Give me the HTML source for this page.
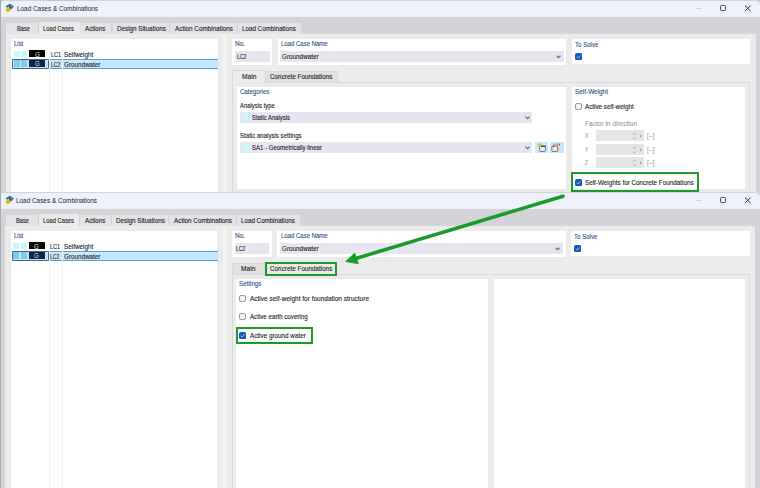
<!DOCTYPE html>
<html><head><meta charset="utf-8">
<style>
html,body{margin:0;padding:0;}
body{width:760px;height:488px;overflow:hidden;position:relative;background:#c8c9ce;font-family:"Liberation Sans",sans-serif;}
.a{position:absolute;}
.t{position:absolute;font-size:7px;line-height:8px;white-space:nowrap;color:#1e1e1e;transform-origin:0 0;}
.lb{color:#344f85;}
</style></head><body>
<div class="a" style="left:0px;top:0px;width:1.00px;height:488.00px;background:#a8aab2;"></div>
<div class="a" style="left:1px;top:0px;width:759.00px;height:600.00px;background:#d3d3d8;border-top-right-radius:5px;border-top-left-radius:3px;"></div>
<div class="a" style="left:1px;top:0px;width:759.00px;height:17.00px;background:#eef1f9;border-top:1px solid #d2d4da;box-sizing:border-box;border-top-right-radius:5px;border-top-left-radius:3px;"></div>
<svg class="a" style="left:0;top:0px" width="20" height="16" viewBox="0 0 20 16"><path d="M5.6 6.6 L9.8 3.8 L13.8 6.4 L11.2 9.4 L8 8.6 Z" fill="#2d5799"/><path d="M9.8 3.8 L13.8 6.4 L11.2 9.4 L10.4 6 Z" fill="#4879bb"/><path d="M9.2 6 C7.5 6.8 5.8 8.3 5.8 10 C5.8 11.3 6.9 12 8.1 12 C9.6 12 10.6 11.1 10.6 9.8 C10.6 8.7 9.9 8.1 9 8 C9.1 7.3 9.3 6.6 9.2 6 Z" fill="#eec21a"/><ellipse cx="8.2" cy="9.8" rx="0.75" ry="0.85" fill="#8c8a78"/></svg>
<div id="t0" class="t " style="left:16.74px;top:4.90px;transform:scaleX(0.9131);-webkit-text-stroke:0.04px currentColor;color:#2a2a2a">Load Cases &amp; Combinations</div>
<div class="a" style="left:696px;top:8px;width:6.00px;height:0.70px;background:#d4d6dc;"></div>
<div class="a" style="left:720px;top:5.3px;width:6.00px;height:5.70px;border:1px solid #484848;border-radius:1.5px;box-sizing:border-box;"></div>
<svg class="a" style="left:744px;top:5px" width="8" height="7" viewBox="0 0 8 7"><path d="M0.9 0.6 L6.6 6.1 M6.6 0.6 L0.9 6.1" stroke="#2a2a2a" stroke-width="0.95"/></svg>
<div class="a" style="left:5.5px;top:33.5px;width:750.10px;height:566.50px;background:#ebebeb;"></div>
<div class="a" style="left:6px;top:23px;width:32.00px;height:10.50px;background:#e3e3e6;"></div>
<div id="t1" class="t " style="left:16.60px;top:24.80px;transform:scaleX(0.8174);-webkit-text-stroke:0.12px currentColor;">Base</div>
<div class="a" style="left:39px;top:22px;width:40.70px;height:11.60px;background:#ebebeb;"></div>
<div id="t2" class="t " style="left:43.40px;top:24.80px;transform:scaleX(0.8282);-webkit-text-stroke:0.12px currentColor;">Load Cases</div>
<div class="a" style="left:80px;top:23px;width:31.00px;height:10.50px;background:#e3e3e6;"></div>
<div id="t3" class="t " style="left:85.00px;top:24.80px;transform:scaleX(0.8848);-webkit-text-stroke:0.12px currentColor;">Actions</div>
<div class="a" style="left:112.5px;top:23px;width:56.40px;height:10.50px;background:#e3e3e6;"></div>
<div id="t4" class="t " style="left:116.76px;top:24.80px;transform:scaleX(0.8957);-webkit-text-stroke:0.12px currentColor;">Design Situations</div>
<div class="a" style="left:169.5px;top:23px;width:67.00px;height:10.50px;background:#e3e3e6;"></div>
<div id="t5" class="t " style="left:174.52px;top:24.80px;transform:scaleX(0.9039);-webkit-text-stroke:0.12px currentColor;">Action Combinations</div>
<div class="a" style="left:237.9px;top:23px;width:63.10px;height:10.50px;background:#e3e3e6;"></div>
<div id="t6" class="t " style="left:241.76px;top:24.80px;transform:scaleX(0.8919);-webkit-text-stroke:0.12px currentColor;">Load Combinations</div>
<div class="a" style="left:11.3px;top:39px;width:206.70px;height:561.00px;background:#fff;"></div>
<div id="t7" class="t lb" style="left:14.02px;top:40.00px;transform:scaleX(0.8492);-webkit-text-stroke:0.12px currentColor;">List</div>
<div class="a" style="left:49px;top:50px;width:1.00px;height:550.00px;background:#efefef;"></div>
<div class="a" style="left:62px;top:50px;width:1.00px;height:550.00px;background:#efefef;"></div>
<div class="a" style="left:13.5px;top:50.5px;width:6.00px;height:6.50px;background:#c4fbff;"></div>
<div class="a" style="left:21px;top:50.5px;width:6.00px;height:6.50px;background:#c4fbff;"></div>
<div class="a" style="left:29px;top:50.2px;width:16.00px;height:6.80px;background:#050505;"></div>
<div id="t8" class="t " style="left:34.70px;top:50.84px;font-size:6.6px;line-height:7.54px;transform:scaleX(0.9333);color:#e0e0e0">G</div>
<div id="t9" class="t " style="left:50.52px;top:50.80px;transform:scaleX(0.7919);-webkit-text-stroke:0.12px currentColor;">LC1</div>
<div id="t10" class="t " style="left:64.00px;top:50.80px;transform:scaleX(0.9047);-webkit-text-stroke:0.12px currentColor;">Selfweight</div>
<div class="a" style="left:12px;top:59px;width:206.00px;height:10.00px;background:#cbe6fb;border-top:1px solid #56a0e0;border-bottom:1px solid #56a0e0;box-sizing:border-box;"></div>
<div class="a" style="left:49px;top:59px;width:1.00px;height:10.00px;background:#e2f0fc;"></div>
<div class="a" style="left:62px;top:59px;width:1.00px;height:10.00px;background:#e2f0fc;"></div>
<div class="a" style="left:12px;top:59px;width:37.00px;height:10.00px;border:1px solid #3d6590;border-radius:1.5px;box-sizing:border-box;"></div>
<div class="a" style="left:13.5px;top:60.2px;width:6.00px;height:6.60px;background:#7dcbea;"></div>
<div class="a" style="left:21px;top:60.2px;width:6.00px;height:6.60px;background:#7dcbea;"></div>
<div class="a" style="left:29px;top:60.2px;width:16.00px;height:6.40px;background:#0c2744;"></div>
<div id="t11" class="t " style="left:34.70px;top:60.44px;font-size:6.6px;line-height:7.54px;transform:scaleX(0.9333);color:#d0dce8">G</div>
<div id="t12" class="t " style="left:50.80px;top:60.50px;transform:scaleX(0.7337);-webkit-text-stroke:0.12px currentColor;">LC2</div>
<div id="t13" class="t " style="left:64.00px;top:60.50px;transform:scaleX(0.8995);-webkit-text-stroke:0.12px currentColor;">Groundwater</div>
<div class="a" style="left:223px;top:34px;width:4.20px;height:566.00px;background:#f2f2f3;"></div>
<div class="a" style="left:232.2px;top:39px;width:39.90px;height:25.50px;background:#fff;"></div>
<div id="t14" class="t lb" style="left:235.00px;top:40.20px;transform:scaleX(0.9355);-webkit-text-stroke:0.12px currentColor;">No.</div>
<div class="a" style="left:235px;top:50.9px;width:34.50px;height:10.80px;background:#e6e6f0;"></div>
<div id="t15" class="t " style="left:236.74px;top:53.00px;transform:scaleX(0.7171);-webkit-text-stroke:0.12px currentColor;">LC2</div>
<div class="a" style="left:277.9px;top:39px;width:288.40px;height:25.50px;background:#fff;"></div>
<div id="t16" class="t lb" style="left:281.00px;top:40.20px;transform:scaleX(0.8564);-webkit-text-stroke:0.12px currentColor;">Load Case Name</div>
<div class="a" style="left:280.3px;top:50.9px;width:283.50px;height:10.80px;background:#e6e6f0;"></div>
<div id="t17" class="t " style="left:282.26px;top:53.00px;transform:scaleX(0.9053);-webkit-text-stroke:0.12px currentColor;">Groundwater</div>
<svg class="a" style="left:555.6px;top:55.2px" width="6" height="4" viewBox="0 0 6 4"><path d="M0.6 0.7 L2.6 2.6 L4.6 0.7" stroke="#707070" stroke-width="1.2" fill="none"/></svg>
<div class="a" style="left:571.8px;top:39px;width:178.30px;height:25.40px;background:#fff;"></div>
<div id="t18" class="t lb" style="left:574.98px;top:40.50px;transform:scaleX(0.8712);-webkit-text-stroke:0.12px currentColor;">To Solve</div>
<svg class="a" style="left:574.5px;top:52.9px" width="7.2" height="7.2" viewBox="0 0 7 7"><rect x="0" y="0" width="7" height="7" rx="1.8" fill="#1858b9"/><path d="M1.8 3.6 L3 4.8 L5.3 2.4" stroke="#fff" stroke-width="0.6" fill="none"/></svg>
<div class="a" style="left:232px;top:81.5px;width:518.00px;height:518.50px;background:#ebebeb;border:1px solid #d9d9de;box-sizing:border-box;"></div>
<div class="a" style="left:232px;top:70.3px;width:34.40px;height:12.70px;background:#ebebeb;border:1px solid #d9d9de;border-bottom:none;box-sizing:border-box;"></div>
<div class="a" style="left:266.4px;top:71.4px;width:71.40px;height:10.60px;background:#e1e1e4;border:1px solid #d9d9de;border-left:none;border-bottom:none;box-sizing:border-box;"></div>
<div id="t19" class="t " style="left:241.74px;top:73.00px;transform:scaleX(0.9500);-webkit-text-stroke:0.12px currentColor;">Main</div>
<div id="t20" class="t " style="left:270.00px;top:73.00px;transform:scaleX(0.9076);-webkit-text-stroke:0.12px currentColor;">Concrete Foundations</div>
<div class="a" style="left:237.3px;top:86.5px;width:329.20px;height:102.50px;background:#fff;"></div>
<div id="t21" class="t lb" style="left:240.00px;top:87.50px;transform:scaleX(0.8653);-webkit-text-stroke:0.12px currentColor;">Categories</div>
<div id="t22" class="t " style="left:240.00px;top:101.80px;transform:scaleX(0.8465);-webkit-text-stroke:0.12px currentColor;">Analysis type</div>
<div class="a" style="left:239.6px;top:111.8px;width:292.40px;height:11.20px;background:#e6e6f0;"></div>
<div class="a" style="left:242.5px;top:114px;width:6.10px;height:6.40px;background:#c4fbff;"></div>
<div id="t23" class="t " style="left:251.50px;top:113.70px;transform:scaleX(0.8415);-webkit-text-stroke:0.12px currentColor;">Static Analysis</div>
<svg class="a" style="left:524.9px;top:115.6px" width="6" height="4" viewBox="0 0 6 4"><path d="M0.6 0.7 L2.6 2.6 L4.6 0.7" stroke="#707070" stroke-width="1.2" fill="none"/></svg>
<div id="t24" class="t " style="left:240.00px;top:132.40px;transform:scaleX(0.8694);-webkit-text-stroke:0.12px currentColor;">Static analysis settings</div>
<div class="a" style="left:239.6px;top:142px;width:292.40px;height:11.10px;background:#e6e6f0;"></div>
<div class="a" style="left:242.5px;top:144.5px;width:6.10px;height:6.30px;background:#c4fbff;"></div>
<div id="t25" class="t " style="left:251.50px;top:143.80px;transform:scaleX(0.8598);-webkit-text-stroke:0.12px currentColor;">SA1 - Geometrically linear</div>
<svg class="a" style="left:524.9px;top:145.8px" width="6" height="4" viewBox="0 0 6 4"><path d="M0.6 0.7 L2.6 2.6 L4.6 0.7" stroke="#707070" stroke-width="1.2" fill="none"/></svg>
<div class="a" style="left:535px;top:142.2px;width:13.30px;height:10.80px;background:#cde5f8;"></div>
<div class="a" style="left:550.3px;top:142.2px;width:13.50px;height:10.80px;background:#cde5f8;"></div>
<svg class="a" style="left:535px;top:142.2px" width="14" height="11" viewBox="0 0 14 11"><rect x="4.7" y="4.1" width="5.7" height="5.4" rx="0.8" fill="#eeeeee" stroke="#5a5a5a" stroke-width="0.8"/><rect x="5.8" y="3.7" width="4.8" height="1.2" fill="#1f2f8a"/><path d="M4.5 1 L5 2.6 L6.5 2.3 L5.5 3.4 L6.5 4.6 L5 4.3 L4.5 5.8 L4 4.3 L2.5 4.6 L3.5 3.4 L2.5 2.3 L4 2.6 Z" fill="#e8e800" stroke="#9a9a40" stroke-width="0.3"/></svg>
<svg class="a" style="left:550.3px;top:142.2px" width="14" height="11" viewBox="0 0 14 11"><rect x="1.9" y="4.1" width="5.8" height="5.4" rx="0.8" fill="#eeeeee" stroke="#5a5a5a" stroke-width="0.8"/><path d="M1.8 4.6 Q3 1.6 6.5 1.4 Q8.6 1.6 8.8 3 L7.2 4.8 L2.2 4.8 Z" fill="#d4a478"/><circle cx="3.6" cy="4.3" r="0.7" fill="#1f2f8a"/><path d="M8.9 1 L10.3 2.2 L9.6 4 L8.8 2.6 Z" fill="#3a70d0"/></svg>
<div class="a" style="left:571.8px;top:86.6px;width:173.70px;height:102.40px;background:#fff;"></div>
<div id="t26" class="t lb" style="left:574.98px;top:88.20px;transform:scaleX(0.9139);-webkit-text-stroke:0.12px currentColor;">Self-Weight</div>
<div class="a" style="left:574.5px;top:103.4px;width:7px;height:7px;border:1px solid #9a9a9a;border-radius:2px;box-sizing:border-box;background:#f4f4f4"></div>
<div id="t27" class="t " style="left:584.98px;top:103.30px;transform:scaleX(0.8943);-webkit-text-stroke:0.12px currentColor;">Active self-weight</div>
<div id="t28" class="t " style="left:584.54px;top:120.30px;transform:scaleX(0.9363);-webkit-text-stroke:0.12px currentColor;color:#a0a0a0">Factor in direction</div>
<div id="t29" class="t " style="left:584.70px;top:131.70px;transform:scaleX(0.7000);-webkit-text-stroke:0.12px currentColor;color:#a0a0a0">X</div>
<div class="a" style="left:595.8px;top:130px;width:48.20px;height:10.80px;background:#e5e5e5;"></div>
<svg class="a" style="left:632px;top:131.5px" width="12" height="8" viewBox="0 0 12 8"><path d="M1.3 2.4 L2.5 1.1 L3.7 2.4 M1.3 5.7 L2.5 7 L3.7 5.7" stroke="#9a9a9a" stroke-width="0.75" fill="none"/><path d="M8 2.6 L10.1 4 L8 5.4 Z" fill="#a0a0a0"/></svg>
<div id="t30" class="t " style="left:647.20px;top:132.00px;transform:scaleX(0.8714);-webkit-text-stroke:0.12px currentColor;color:#a0a0a0">[--]</div>
<div id="t31" class="t " style="left:584.70px;top:145.70px;transform:scaleX(0.7000);-webkit-text-stroke:0.12px currentColor;color:#a0a0a0">Y</div>
<div class="a" style="left:595.8px;top:144px;width:48.20px;height:10.80px;background:#e5e5e5;"></div>
<svg class="a" style="left:632px;top:145.5px" width="12" height="8" viewBox="0 0 12 8"><path d="M1.3 2.4 L2.5 1.1 L3.7 2.4 M1.3 5.7 L2.5 7 L3.7 5.7" stroke="#9a9a9a" stroke-width="0.75" fill="none"/><path d="M8 2.6 L10.1 4 L8 5.4 Z" fill="#a0a0a0"/></svg>
<div id="t32" class="t " style="left:647.20px;top:146.00px;transform:scaleX(0.8714);-webkit-text-stroke:0.12px currentColor;color:#a0a0a0">[--]</div>
<div id="t33" class="t " style="left:584.70px;top:158.90px;transform:scaleX(0.7000);-webkit-text-stroke:0.12px currentColor;color:#a0a0a0">Z</div>
<div class="a" style="left:595.8px;top:157.2px;width:48.20px;height:10.80px;background:#e5e5e5;"></div>
<svg class="a" style="left:632px;top:158.7px" width="12" height="8" viewBox="0 0 12 8"><path d="M1.3 2.4 L2.5 1.1 L3.7 2.4 M1.3 5.7 L2.5 7 L3.7 5.7" stroke="#9a9a9a" stroke-width="0.75" fill="none"/><path d="M8 2.6 L10.1 4 L8 5.4 Z" fill="#a0a0a0"/></svg>
<div id="t34" class="t " style="left:647.20px;top:159.20px;transform:scaleX(0.8714);-webkit-text-stroke:0.12px currentColor;color:#a0a0a0">[--]</div>
<div class="a" style="left:570.7px;top:171.9px;width:128.10px;height:19.80px;border:2px solid #1e9a2b;box-sizing:border-box;"></div>
<svg class="a" style="left:574.5px;top:178.7px" width="7.2" height="7.2" viewBox="0 0 7 7"><rect x="0" y="0" width="7" height="7" rx="1.8" fill="#1858b9"/><path d="M1.8 3.6 L3 4.8 L5.3 2.4" stroke="#fff" stroke-width="0.6" fill="none"/></svg>
<div id="t35" class="t " style="left:585.00px;top:178.70px;transform:scaleX(0.9009);-webkit-text-stroke:0.12px currentColor;">Self-Weights for Concrete Foundations</div>
<div class="a" style="left:48px;top:0px;width:28.00px;height:1.00px;background:#bcc6da;"></div>
<div class="a" style="left:-0.5px;top:0;width:761px;height:488px"><div class="a" style="left:1px;top:192px;width:759.00px;height:600.00px;background:#d3d3d8;border-top-right-radius:5px;border-top-left-radius:3px;"></div>
<div class="a" style="left:1px;top:192px;width:759.00px;height:17.00px;background:#eef1f9;border-top:1px solid #d2d4da;box-sizing:border-box;border-top-right-radius:5px;border-top-left-radius:3px;"></div>
<svg class="a" style="left:0;top:192px" width="20" height="16" viewBox="0 0 20 16"><path d="M5.6 6.6 L9.8 3.8 L13.8 6.4 L11.2 9.4 L8 8.6 Z" fill="#2d5799"/><path d="M9.8 3.8 L13.8 6.4 L11.2 9.4 L10.4 6 Z" fill="#4879bb"/><path d="M9.2 6 C7.5 6.8 5.8 8.3 5.8 10 C5.8 11.3 6.9 12 8.1 12 C9.6 12 10.6 11.1 10.6 9.8 C10.6 8.7 9.9 8.1 9 8 C9.1 7.3 9.3 6.6 9.2 6 Z" fill="#eec21a"/><ellipse cx="8.2" cy="9.8" rx="0.75" ry="0.85" fill="#8c8a78"/></svg>
<div id="t36" class="t " style="left:16.74px;top:196.90px;transform:scaleX(0.9131);-webkit-text-stroke:0.04px currentColor;color:#2a2a2a">Load Cases &amp; Combinations</div>
<div class="a" style="left:696px;top:200px;width:6.00px;height:0.70px;background:#d4d6dc;"></div>
<div class="a" style="left:720px;top:197.3px;width:6.00px;height:5.70px;border:1px solid #484848;border-radius:1.5px;box-sizing:border-box;"></div>
<svg class="a" style="left:744px;top:197px" width="8" height="7" viewBox="0 0 8 7"><path d="M0.9 0.6 L6.6 6.1 M6.6 0.6 L0.9 6.1" stroke="#2a2a2a" stroke-width="0.95"/></svg>
<div class="a" style="left:5.5px;top:225.5px;width:750.10px;height:566.50px;background:#ebebeb;"></div>
<div class="a" style="left:6px;top:215px;width:32.00px;height:10.50px;background:#e3e3e6;"></div>
<div id="t37" class="t " style="left:16.60px;top:216.80px;transform:scaleX(0.8174);-webkit-text-stroke:0.12px currentColor;">Base</div>
<div class="a" style="left:39px;top:214px;width:40.70px;height:11.60px;background:#ebebeb;"></div>
<div id="t38" class="t " style="left:43.40px;top:216.80px;transform:scaleX(0.8282);-webkit-text-stroke:0.12px currentColor;">Load Cases</div>
<div class="a" style="left:80px;top:215px;width:31.00px;height:10.50px;background:#e3e3e6;"></div>
<div id="t39" class="t " style="left:85.00px;top:216.80px;transform:scaleX(0.8848);-webkit-text-stroke:0.12px currentColor;">Actions</div>
<div class="a" style="left:112.5px;top:215px;width:56.40px;height:10.50px;background:#e3e3e6;"></div>
<div id="t40" class="t " style="left:116.76px;top:216.80px;transform:scaleX(0.8957);-webkit-text-stroke:0.12px currentColor;">Design Situations</div>
<div class="a" style="left:169.5px;top:215px;width:67.00px;height:10.50px;background:#e3e3e6;"></div>
<div id="t41" class="t " style="left:174.52px;top:216.80px;transform:scaleX(0.9039);-webkit-text-stroke:0.12px currentColor;">Action Combinations</div>
<div class="a" style="left:237.9px;top:215px;width:63.10px;height:10.50px;background:#e3e3e6;"></div>
<div id="t42" class="t " style="left:241.76px;top:216.80px;transform:scaleX(0.8919);-webkit-text-stroke:0.12px currentColor;">Load Combinations</div>
<div class="a" style="left:11.3px;top:231px;width:206.70px;height:561.00px;background:#fff;"></div>
<div id="t43" class="t lb" style="left:14.02px;top:232.00px;transform:scaleX(0.8492);-webkit-text-stroke:0.12px currentColor;">List</div>
<div class="a" style="left:49px;top:242px;width:1.00px;height:550.00px;background:#efefef;"></div>
<div class="a" style="left:62px;top:242px;width:1.00px;height:550.00px;background:#efefef;"></div>
<div class="a" style="left:13.5px;top:242.5px;width:6.00px;height:6.50px;background:#c4fbff;"></div>
<div class="a" style="left:21px;top:242.5px;width:6.00px;height:6.50px;background:#c4fbff;"></div>
<div class="a" style="left:29px;top:242.2px;width:16.00px;height:6.80px;background:#050505;"></div>
<div id="t44" class="t " style="left:34.70px;top:242.84px;font-size:6.6px;line-height:7.54px;transform:scaleX(0.9333);color:#e0e0e0">G</div>
<div id="t45" class="t " style="left:50.52px;top:242.80px;transform:scaleX(0.7919);-webkit-text-stroke:0.12px currentColor;">LC1</div>
<div id="t46" class="t " style="left:64.00px;top:242.80px;transform:scaleX(0.9047);-webkit-text-stroke:0.12px currentColor;">Selfweight</div>
<div class="a" style="left:12px;top:251px;width:206.00px;height:10.00px;background:#cbe6fb;border-top:1px solid #56a0e0;border-bottom:1px solid #56a0e0;box-sizing:border-box;"></div>
<div class="a" style="left:49px;top:251px;width:1.00px;height:10.00px;background:#e2f0fc;"></div>
<div class="a" style="left:62px;top:251px;width:1.00px;height:10.00px;background:#e2f0fc;"></div>
<div class="a" style="left:12px;top:251px;width:37.00px;height:10.00px;border:1px solid #3d6590;border-radius:1.5px;box-sizing:border-box;"></div>
<div class="a" style="left:13.5px;top:252.2px;width:6.00px;height:6.60px;background:#7dcbea;"></div>
<div class="a" style="left:21px;top:252.2px;width:6.00px;height:6.60px;background:#7dcbea;"></div>
<div class="a" style="left:29px;top:252.2px;width:16.00px;height:6.40px;background:#0c2744;"></div>
<div id="t47" class="t " style="left:34.70px;top:252.44px;font-size:6.6px;line-height:7.54px;transform:scaleX(0.9333);color:#d0dce8">G</div>
<div id="t48" class="t " style="left:50.80px;top:252.50px;transform:scaleX(0.7337);-webkit-text-stroke:0.12px currentColor;">LC2</div>
<div id="t49" class="t " style="left:64.00px;top:252.50px;transform:scaleX(0.8995);-webkit-text-stroke:0.12px currentColor;">Groundwater</div>
<div class="a" style="left:223px;top:226px;width:4.20px;height:566.00px;background:#f2f2f3;"></div>
<div class="a" style="left:232.2px;top:231px;width:39.90px;height:25.50px;background:#fff;"></div>
<div id="t50" class="t lb" style="left:235.00px;top:232.20px;transform:scaleX(0.9355);-webkit-text-stroke:0.12px currentColor;">No.</div>
<div class="a" style="left:235px;top:242.9px;width:34.50px;height:10.80px;background:#e6e6f0;"></div>
<div id="t51" class="t " style="left:236.74px;top:245.00px;transform:scaleX(0.7171);-webkit-text-stroke:0.12px currentColor;">LC2</div>
<div class="a" style="left:277.9px;top:231px;width:288.40px;height:25.50px;background:#fff;"></div>
<div id="t52" class="t lb" style="left:281.00px;top:232.20px;transform:scaleX(0.8564);-webkit-text-stroke:0.12px currentColor;">Load Case Name</div>
<div class="a" style="left:280.3px;top:242.9px;width:283.50px;height:10.80px;background:#e6e6f0;"></div>
<div id="t53" class="t " style="left:282.26px;top:245.00px;transform:scaleX(0.9053);-webkit-text-stroke:0.12px currentColor;">Groundwater</div>
<svg class="a" style="left:555.6px;top:247.2px" width="6" height="4" viewBox="0 0 6 4"><path d="M0.6 0.7 L2.6 2.6 L4.6 0.7" stroke="#707070" stroke-width="1.2" fill="none"/></svg>
<div class="a" style="left:571.8px;top:231px;width:178.30px;height:25.40px;background:#fff;"></div>
<div id="t54" class="t lb" style="left:574.98px;top:232.50px;transform:scaleX(0.8712);-webkit-text-stroke:0.12px currentColor;">To Solve</div>
<svg class="a" style="left:574.5px;top:244.9px" width="7.2" height="7.2" viewBox="0 0 7 7"><rect x="0" y="0" width="7" height="7" rx="1.8" fill="#1858b9"/><path d="M1.8 3.6 L3 4.8 L5.3 2.4" stroke="#fff" stroke-width="0.6" fill="none"/></svg>
<div class="a" style="left:232px;top:273.5px;width:518.00px;height:518.50px;background:#ebebeb;border:1px solid #d9d9de;box-sizing:border-box;"></div>
<div class="a" style="left:232px;top:263.4px;width:32.50px;height:10.60px;background:#e1e1e4;border:1px solid #d9d9de;border-right:none;border-bottom:none;box-sizing:border-box;"></div>
<div class="a" style="left:264.5px;top:262.3px;width:73.00px;height:12.70px;background:#ebebeb;border:1px solid #d9d9de;border-bottom:none;box-sizing:border-box;"></div>
<div id="t55" class="t " style="left:241.74px;top:265.00px;transform:scaleX(0.9500);-webkit-text-stroke:0.12px currentColor;">Main</div>
<div id="t56" class="t " style="left:270.00px;top:265.00px;transform:scaleX(0.9076);-webkit-text-stroke:0.12px currentColor;">Concrete Foundations</div>
<div class="a" style="left:236.7px;top:278.6px;width:251.80px;height:513.40px;background:#fff;"></div>
<div class="a" style="left:494.3px;top:278.6px;width:251.10px;height:513.40px;background:#fff;"></div>
<div id="t57" class="t lb" style="left:239.80px;top:279.70px;transform:scaleX(0.8840);-webkit-text-stroke:0.12px currentColor;">Settings</div>
<div class="a" style="left:239.5px;top:295.2px;width:7px;height:7px;border:1px solid #9a9a9a;border-radius:2px;box-sizing:border-box;background:#f4f4f4"></div>
<div id="t58" class="t " style="left:250.10px;top:294.80px;transform:scaleX(0.9268);-webkit-text-stroke:0.12px currentColor;">Active self-weight for foundation structure</div>
<div class="a" style="left:239.5px;top:313.2px;width:7px;height:7px;border:1px solid #9a9a9a;border-radius:2px;box-sizing:border-box;background:#f4f4f4"></div>
<div id="t59" class="t " style="left:250.10px;top:312.80px;transform:scaleX(0.8813);-webkit-text-stroke:0.12px currentColor;">Active earth covering</div>
<svg class="a" style="left:239.5px;top:332px" width="7.2" height="7.2" viewBox="0 0 7 7"><rect x="0" y="0" width="7" height="7" rx="1.8" fill="#1858b9"/><path d="M1.8 3.6 L3 4.8 L5.3 2.4" stroke="#fff" stroke-width="0.6" fill="none"/></svg>
<div id="t60" class="t " style="left:250.10px;top:331.60px;transform:scaleX(0.9019);-webkit-text-stroke:0.12px currentColor;">Active ground water</div>
<div class="a" style="left:236px;top:326.8px;width:77.30px;height:16.80px;border:2px solid #1e9a2b;box-sizing:border-box;"></div>
<div class="a" style="left:265.3px;top:261.5px;width:72.40px;height:14.30px;border:2px solid #1e9a2b;box-sizing:border-box;"></div>
</div><svg class="a" style="left:0;top:0" width="760" height="488" viewBox="0 0 760 488"><path d="M563 196.2 L354 259" stroke="#1a9a2a" stroke-width="3.5" stroke-linecap="round" fill="none"/><path d="M345.6 261.5 L354.7 253.1 L358.4 263.8 Z" fill="#1a9a2a" stroke="#1a9a2a" stroke-width="0.7" stroke-linejoin="round"/></svg>
</body></html>
